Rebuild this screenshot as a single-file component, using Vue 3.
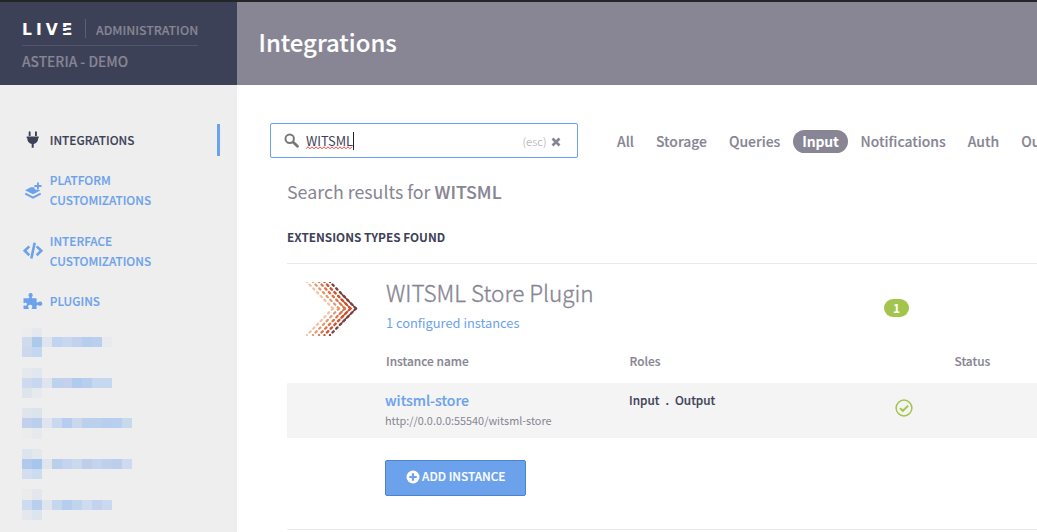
<script setup>
const tabs = ['All', 'Storage', 'Queries', 'Input', 'Notifications', 'Auth', 'Output']
const activeTab = 'Input'

// Redacted menu entries: row heights plus the colour of every 10px cell
const redacted = [
  { y: 0, h: [9, 10, 10], head: [['#ececed', '#e5e9ee'], ['#cfdaed', '#accaec'], ['#cbd8ee', '#c3d7f0']], cells: ['#e0e4ee', '#bfd4ef', '#c7d7ef', '#c2d1ee', '#b7cdee', '#bacfef', '#e7ebee'] },
  { y: 40, h: [10, 10, 10], head: [['#e6e8ee', '#e1e6ef'], ['#cedaee', '#c8d7f0'], ['#dfe4ec', '#e6eaed']], cells: ['#dfe4ee', '#bdd2ec', '#c4d1ed', '#b1cbee', '#b8ceef', '#c6d8f0', '#c6d8f0'] },
  { y: 80, h: [10, 10, 11], head: [['#e0e4ec', '#dbe3ed'], ['#c3d0ed', '#b9cfec'], ['#ebecec', '#e6eaec']], cells: ['#dfe4ee', '#c8d8ef', '#b7cdef', '#cbd8ec', '#bad0ec', '#bbd0ed', '#b8ceee', '#b9cfef', '#c9d9ec'] },
  { y: 121, h: [10, 10, 10], head: [['#dee4ee', '#e3e8ec'], ['#b2c9ec', '#a7c6ee'], ['#d3dff0', '#cbdcef']], cells: ['#dfe4ee', '#b9d0ed', '#c2d4ef', '#cbd9ed', '#bdcfed', '#c2d4ef', '#bfd0ed', '#bdceed', '#cddaef'] },
  { y: 161, h: [11, 10, 10], head: [['#e9ebed', '#e3e7ed'], ['#cedaee', '#b8d0ed'], ['#e4e8ed', '#dce4ed']], cells: ['#dfe4ee', '#c5d6ef', '#b7cded', '#c1d4ee', '#cfdcf0', '#c3d3ee', '#cad9ef'] },
]
const blocks = redacted.flatMap(({ y, h, head, cells }) => {
  const out = []
  let top = y
  h.forEach((height, r) => {
    head[r].forEach((fill, c) => out.push({ x: c * 10, y: top, height, fill }))
    if (r === 1) cells.forEach((fill, c) => out.push({ x: 20 + c * 10, y: top, height, fill }))
    top += height
  })
  return out
})

const chevrons = [
  { top: 1, tip: 27, color: '#eec3a4', w: 2.2, off: 0 },
  { top: 7, tip: 33, color: '#e3976e', w: 2.2, off: 0 },
  { top: 13, tip: 39, color: '#db7448', w: 2.3, off: 0 },
  { top: 18.5, tip: 44.5, color: '#d2502a', w: 2.4, off: 0 },
  { top: 24, tip: 50, color: '#7a403e', w: 2.3, off: 0 },
]
</script>

<template>
  <div class="app">
    <header class="top">
      <div class="brand">
        <div class="brand-row">
          <span class="live">LIV<span class="e">E</span></span>
          <span class="admin">ADMINISTRATION</span>
        </div>
        <div class="tenant">ASTERIA - DEMO</div>
      </div>
      <h1>Integrations</h1>
    </header>
    <div class="body">
      <aside>
        <nav>
          <a class="item active">
            <svg width="22" height="20" viewBox="0 0 22 20"><path fill="#3d4157" d="M6.700 1.800q1-.9 1.900 0V6H6.700zM13 1.800q1-.9 1.900 0V6H13zM4.700 6.600h12v1.600h-.6c0 3.200-1.500 5.200-4.400 5.800v3.800H9.700V14C6.800 13.400 5.300 11.400 5.300 8.200h-.6z"/></svg>
            <span>INTEGRATIONS</span>
          </a>
          <a class="item">
            <svg width="22" height="20" viewBox="0 0 22 20"><path fill="#6ca2ec" d="M8.800 7.300 3 10.200l8 4 7.300-3.700-.9-.6h-2.300L12.700 9.300l-.4-2zM15 2.500h1.900v2.600h2.600V7h-2.600v2.600H15V7h-2.600V5.100H15z"/><path d="m3.300 13.700 7.700 3.900 7.700-3.900" fill="none" stroke="#6ca2ec" stroke-width="2"/></svg>
            <span>PLATFORM<br>CUSTOMIZATIONS</span>
          </a>
          <a class="item third">
            <svg width="22" height="20" viewBox="0 0 22 20" fill="none" stroke="#6ca2ec" stroke-width="2.600"><path d="M7.300 5.400 2.700 9.800l4.600 4.400M14.700 5.400l4.600 4.400-4.600 4.400M12.700 1.700 9.300 17.600"/></svg>
            <span>INTERFACE<br>CUSTOMIZATIONS</span>
          </a>
          <a class="item">
            <svg width="22" height="20" viewBox="0 0 22 20"><path fill="#6ca2ec" d="M1.500 7.300h5.100c.8 0 1-.8.500-1.500-1-1.200-.9-3.900 1.500-3.900s2.500 2.700 1.500 3.900c-.5.700-.3 1.500.5 1.500h4v3.500c0 .8.8 1 1.500.4 1.300-1.100 4.200-.8 4.200 1.500s-2.900 2.600-4.200 1.500c-.7-.6-1.500-.3-1.500.5v3.400h-4.200c-.9 0-.9-.7-.4-1.400.8-1.300.2-2.900-1.800-2.900s-2.500 1.700-1.700 2.900c.5.700.4 1.400-.5 1.400H1.500v-3.300c0-.7.500-.8 1.100-.4 1.200.7 2.300 0 2.300-1.200s-1.100-1.900-2.300-1.200c-.6.400-1.100.2-1.100-.5z"/></svg>
            <span>PLUGINS</span>
          </a>
        </nav>
        <svg class="redacted" width="110" height="192" shape-rendering="crispEdges">
          <rect v-for="(b, i) in blocks" :key="i" :x="b.x" :y="b.y" width="10" :height="b.height" :fill="b.fill" />
        </svg>
      </aside>
      <main>
        <div class="toolbar">
          <div class="search">
            <svg width="16" height="16" viewBox="0 0 16 16" fill="none"><circle cx="5.700" cy="5.700" r="4.200" stroke="#77777b" stroke-width="2"/><path d="m9.200 9.200 4.300 4.100" stroke="#77777b" stroke-width="2.800" stroke-linecap="round"/></svg>
            <span class="query">WITSML<svg class="squiggle" width="48" height="4" viewBox="0 0 48 4"><path d="M0 2.800 2 .8l2 2 2-2 2 2 2-2 2 2 2-2 2 2 2-2 2 2 2-2 2 2 2-2 2 2 2-2 2 2 2-2 2 2 2-2 2 2 2-2 2 2 2-2" fill="none" stroke="#e8453c"/></svg></span>
            <i class="caret"></i>
            <span class="esc">(esc)</span>
            <svg class="clear" width="10" height="10" viewBox="0 0 10 10"><path d="m1.500 1.500 7 7M8.500 1.500l-7 7" stroke="#878593" stroke-width="2.600"/></svg>
          </div>
          <div class="tabs">
            <a v-for="t in tabs" :key="t" :class="{ on: t === activeTab }">{{ t }}</a>
          </div>
        </div>
        <section>
          <div class="results">Search results for <b>WITSML</b></div>
          <h2>EXTENSIONS TYPES FOUND</h2>
          <div class="plugin">
            <svg class="logo" width="54" height="54" viewBox="0 0 54 54" fill="none" stroke-linecap="round">
              <g v-for="c in chevrons" :key="c.tip" :stroke="c.color" :stroke-width="c.w">
                <path :d="`M${c.tip} 26.500L${c.top} 0`" stroke-dasharray="1.800 3.500" :stroke-dashoffset="c.off" />
                <path :d="`M${c.tip} 26.500L${c.top} 53`" stroke-dasharray="1.800 3.500" :stroke-dashoffset="c.off" />
              </g>
              <path d="m36 12.500 14 14-14 14" stroke="#7a403e" stroke-width="1.600" />
              <path d="m35 17 9.500 9.500L35 36" stroke="#d2502a" stroke-width="1.500" />
              <path d="m33 20.500 6 6-6 6" stroke="#db7448" stroke-width="1.400" />
            </svg>
            <div class="plugin-text">
              <h3>WITSML Store Plugin</h3>
              <a class="count">1 configured instances</a>
            </div>
            <span class="badge">1</span>
          </div>
          <div class="cols head"><span>Instance name</span><span>Roles</span><span class="status">Status</span></div>
          <div class="cols row">
            <div>
              <a class="name">witsml-store</a>
              <div class="url">http://0.0.0.0:55540/witsml-store</div>
            </div>
            <div class="roles"><span>Input</span><span>.</span><span>Output</span></div>
            <svg width="18" height="18" viewBox="0 0 18 18" fill="none" stroke="#a3c44d"><circle cx="9" cy="9" r="7.900" stroke-width="1.500"/><path d="m5 9.100 2.800 2.700 5.400-5.200" stroke-width="2"/></svg>
          </div>
          <button>
            <svg width="14" height="14" viewBox="0 0 14 14"><circle cx="7" cy="7" r="6.500" fill="#fff"/><path d="M7 3.300v7.400M3.300 7h7.400" stroke="#6ca2ec" stroke-width="2.200"/></svg>
            <span>ADD INSTANCE</span>
          </button>
          <div class="end"></div>
        </section>
      </main>
    </div>
  </div>
</template>

<style>
body { margin: 0; overflow: hidden; }
</style>

<style scoped>
.app { width: 1037px; height: 532px; overflow: hidden; background: #fff; color: #878593; font-family: "Noto Sans CJK JP", "Noto Sans CJK SC", "Open Sans", sans-serif; font-size: 12.600px; font-weight: 500; display: flex; flex-direction: column; white-space: nowrap; }
.app * { box-sizing: border-box; }
svg { display: block; flex: none; }
h1, h2, h3 { margin: 0; }
.admin, .tenant, h1, .item span, .tabs a, .results b, .head, .name, .roles, button span { -webkit-text-stroke: .15px currentColor; }
.top { height: 85px; flex: none; border-top: 2px solid #242526; display: flex; background: #888694; }
.brand { width: 237px; background: #3d4157; padding: 17px 0 0 22px; }
.brand-row { width: 176px; height: 27px; border-bottom: 1px solid #53566b; display: flex; align-items: flex-start; }
.live { width: 64px; flex: none; height: 19px; border-right: 1px solid #5d6074; color: #fff; font: 700 15.500px/22px "DejaVu Sans", sans-serif; letter-spacing: 4px; }
.e { display: inline-block; position: relative; height: 22px; }
.e::before, .e::after { content: ""; position: absolute; left: 0; top: 8px; width: 5px; height: 1px; background: #3d4157; }
.e::after { top: 12px; height: 2px; }
.admin { margin-left: 10px; line-height: 22px; font-size: 12.300px; }
.tenant { line-height: 20px; margin-top: 5px; font-size: 13.800px; }
h1 { padding-left: 21.500px; line-height: 79px; font-size: 23.900px; font-weight: 500; color: #fff; }
.body { flex: 1; display: flex; min-height: 0; }
aside { width: 237px; flex: none; background: #eee; padding-top: 39px; }
nav { display: flex; flex-direction: column; gap: 20px; }
.item { display: flex; align-items: center; padding-left: 22px; color: #6ca2ec; line-height: 20px; font-size: 11.800px; }
.item span { margin-left: 5.800px; }
.item.third { margin-top: 1px; }
.item.active { color: #3d4157; width: 220px; height: 32px; margin-bottom: -6px; border-right: 3px solid #6ca2ec; }
.redacted { margin: 17px 0 0 22px; }
main { flex: 1; min-width: 0; padding: 38px 0 0 33px; overflow: hidden; }
.toolbar { display: flex; align-items: center; height: 35px; }
.search { width: 308px; height: 35px; flex: none; border: 1px solid #6ca2ec; border-radius: 2px; display: flex; align-items: center; padding-left: 13px; }
.query { position: relative; margin-left: 6px; font-weight: 400; font-size: 12.800px; color: #3d4157; line-height: 33px; }
.squiggle { position: absolute; left: 0; top: 22px; }
.caret { width: 1px; height: 18px; background: #222; }
.esc { margin-left: auto; font-weight: 300; color: #a3a2aa; font-size: 11.300px; padding-top: 1px; }
.clear { margin: 2px 16px 0 4.500px; }
.tabs { display: flex; gap: 4px; margin: 2px 0 0 30px; font-size: 13.950px; }
.tabs a { padding: 0 9px; height: 23px; line-height: 22px; border-radius: 12px; }
.tabs .on { background: #888694; color: #fff; font-weight: 700; letter-spacing: -.2px; -webkit-text-stroke: 0; }
section { padding-left: 17px; }
.results { margin-top: 18px; line-height: 30px; font-size: 17.800px; font-weight: 400; }
.results b { font-weight: 500; }
h2 { margin-top: 20px; line-height: 22px; font-size: 11.800px; font-weight: 700; color: #3d4157; }
.plugin { margin-top: 15px; border-top: 1px solid #eaeaec; height: 80px; display: flex; }
.logo { margin: 18px 0 0 19px; }
.plugin-text { margin-left: 26px; width: 498px; padding-top: 13px; }
h3 { font-size: 22.500px; font-weight: 300; line-height: 30px; -webkit-text-stroke: .35px currentColor; }
.count { display: block; font-size: 12.850px; font-weight: 400; line-height: 20px; margin-top: 6px; color: #6ca2ec; }
.badge { margin-top: 35px; width: 25px; height: 18px; border-radius: 9px; background: #a3c44d; color: #fff; text-align: center; font-weight: 700; font-size: 12px; line-height: 17px; }
.cols { display: grid; grid-template-columns: 243.500px 266px 1fr; padding-left: 99px; }
.head { height: 40px; line-height: 36px; font-size: 11.900px; }
.head .status { padding-left: 59px; }
.row { height: 55px; padding-left: 98px; background: #f4f4f4; }
.name { display: block; margin-top: 7px; line-height: 20px; font-size: 14px; color: #6ca2ec; }
.url { line-height: 20px; font-size: 10.870px; font-weight: 400; }
.roles { display: flex; gap: 6px; padding-left: .5px; color: #3d4157; font-size: 11.800px; line-height: 34px; }
.row > svg { margin: 16px 0 0 .5px; }
button { margin: 22px 0 0 98px; width: 141px; height: 36px; padding: 0 0 2px; border: 1px solid #4c84cb; border-radius: 2px; background: #6ca2ec; color: #fff; font: inherit; font-size: 11.850px; display: flex; align-items: center; justify-content: center; gap: 2.500px; }
button span { margin-top: -3px; }
button svg { margin-top: -1px; }
.end { margin-top: 33px; border-top: 1px solid #eaeaec; }
</style>
